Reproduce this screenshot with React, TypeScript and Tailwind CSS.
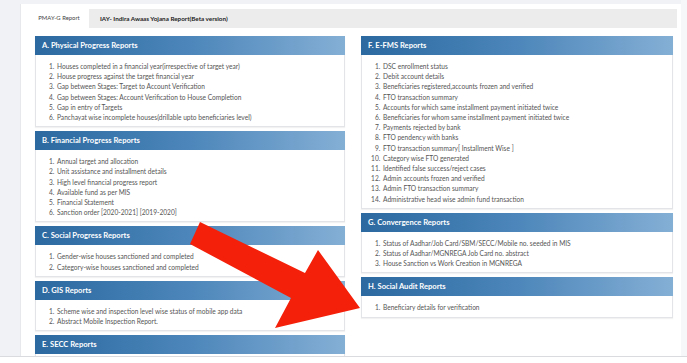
import React from 'react';

type Panel = { title: string; items: string[] };

const leftPanels: Panel[] = [
  {
    title: 'A. Physical Progress Reports',
    items: [
      'Houses completed in a financial year(irrespective of target year)',
      'House progress against the target financial year',
      'Gap between Stages: Target to Account Verification',
      'Gap between Stages: Account Verification to House Completion',
      'Gap in entry of Targets',
      'Panchayat wise incomplete houses(drillable upto beneficiaries level)',
    ],
  },
  {
    title: 'B. Financial Progress Reports',
    items: [
      'Annual target and allocation',
      'Unit assistance and installment details',
      'High level financial progress report',
      'Available fund as per MIS',
      'Financial Statement',
      'Sanction order [2020-2021] [2019-2020]',
    ],
  },
  {
    title: 'C. Social Progress Reports',
    items: ['Gender-wise houses sanctioned and completed', 'Category-wise houses sanctioned and completed'],
  },
  {
    title: 'D. GIS Reports',
    items: ['Scheme wise and inspection level wise status of mobile app data', 'Abstract Mobile Inspection Report.'],
  },
  {
    title: 'E. SECC Reports',
    items: [],
  },
];

const rightPanels: Panel[] = [
  {
    title: 'F. E-FMS Reports',
    items: [
      'DSC enrollment status',
      'Debit account details',
      'Beneficiaries registered,accounts frozen and verified',
      'FTO transaction summary',
      'Accounts for which same installment payment initiated twice',
      'Beneficiaries for whom same installment payment initiated twice',
      'Payments rejected by bank',
      'FTO pendency with banks',
      'FTO transaction summary[ Installment Wise ]',
      'Category wise FTO generated',
      'Identified false success/reject cases',
      'Admin accounts frozen and verified',
      'Admin FTO transaction summary',
      'Administrative head wise admin fund transaction',
    ],
  },
  {
    title: 'G. Convergence Reports',
    items: [
      'Status of Aadhar/Job Card/SBM/SECC/Mobile no. seeded in MIS',
      'Status of Aadhar/MGNREGA Job Card no. abstract',
      'House Sanction vs Work Creation in MGNREGA',
    ],
  },
  {
    title: 'H. Social Audit Reports',
    items: ['Beneficiary details for verification'],
  },
];

const ReportPanel = ({ panel }: { panel: Panel }) => (
  <div className="bg-white shadow-[0_1px_1px_rgba(0,0,0,0.05)]">
    <div className="h-[19px] flex items-center px-[7px] bg-gradient-to-r from-[#2b69a0] via-[#4c86ba] to-[#84afd5] text-white font-bold text-[7.6px]">
      {panel.title}
    </div>
    <ol className="list-decimal min-h-[20px] border-x border-b border-[#e2e4e7] pl-[20px] pt-[6px] pb-[4px] text-[#555] text-[6.6px] leading-[10.2px]">
      {panel.items.map((item) => (
        <li key={item} className="pl-[1px]">{item}</li>
      ))}
    </ol>
  </div>
);

export default function App() {
  return (
    <div
      className="relative w-[687px] h-[363px] overflow-hidden bg-white flex flex-col"
      style={{ fontFamily: 'Lato, "Open Sans", sans-serif' }}
    >
      <div className="h-[356px] flex bg-[#f0f2f5] overflow-hidden">
        <div className="w-[20px] shrink-0" />
        <div className="w-[661px] shrink-0 mt-[4px] bg-white border-l border-[#e6e8eb] pt-[5px] pl-[8px] pr-[4px]">
          <div className="h-[19px] bg-[#ececec] flex items-stretch">
            <div className="w-[60px] bg-white flex items-center justify-center text-[5.9px] text-[#444]">PMAY-G Report</div>
            <div className="pl-[11px] flex items-center text-[6.3px] font-bold text-[#222]">
              IAY- Indira Awaas Yojana Report(Beta version)
            </div>
          </div>
          <div className="flex gap-[16px] pl-[6px] pt-[8px]">
            <div className="w-[310px] flex flex-col gap-[4px]">
              {leftPanels.map((p) => (
                <ReportPanel key={p.title} panel={p} />
              ))}
            </div>
            <div className="w-[312px] flex flex-col gap-[4px]">
              {rightPanels.map((p) => (
                <ReportPanel key={p.title} panel={p} />
              ))}
            </div>
          </div>
        </div>
        <div className="flex-1 bg-[#f6f7f9]" />
      </div>
      <div className="flex-1 border-t border-[#d9dbde] bg-white" />

      <svg className="absolute left-0 top-0 pointer-events-none" width="687" height="363" viewBox="0 0 687 363">
        <polygon
          points="200,222 305,273 318,250 360,308 275,328 291,298 190,244"
          fill="#f4200a"
        />
      </svg>
    </div>
  );
}
